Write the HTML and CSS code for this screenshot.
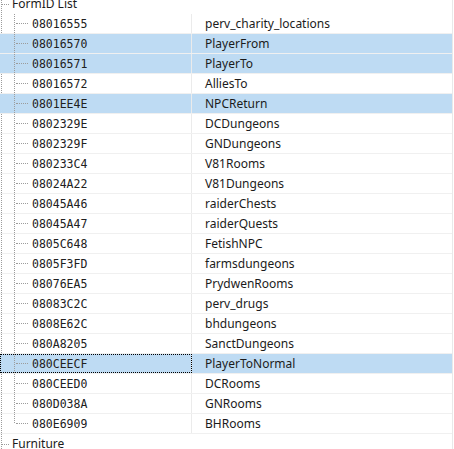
FILE: index.html
```html
<!DOCTYPE html>
<html>
<head>
<meta charset="utf-8">
<link rel="stylesheet" href="styles.css">
</head>
<body>
<div class="tree">
  <div class="node"><span class="label">FormID List</span></div>
  <div class="row"><div class="id">08016555</div><div class="name">perv_charity_locations</div></div>
  <div class="row sel"><div class="id">08016570</div><div class="name">PlayerFrom</div></div>
  <div class="row sel"><div class="id">08016571</div><div class="name">PlayerTo</div></div>
  <div class="row"><div class="id">08016572</div><div class="name">AlliesTo</div></div>
  <div class="row sel"><div class="id">0801EE4E</div><div class="name">NPCReturn</div></div>
  <div class="row"><div class="id">0802329E</div><div class="name">DCDungeons</div></div>
  <div class="row"><div class="id">0802329F</div><div class="name">GNDungeons</div></div>
  <div class="row"><div class="id">080233C4</div><div class="name">V81Rooms</div></div>
  <div class="row"><div class="id">08024A22</div><div class="name">V81Dungeons</div></div>
  <div class="row"><div class="id">08045A46</div><div class="name">raiderChests</div></div>
  <div class="row"><div class="id">08045A47</div><div class="name">raiderQuests</div></div>
  <div class="row"><div class="id">0805C648</div><div class="name">FetishNPC</div></div>
  <div class="row"><div class="id">0805F3FD</div><div class="name">farmsdungeons</div></div>
  <div class="row"><div class="id">08076EA5</div><div class="name">PrydwenRooms</div></div>
  <div class="row"><div class="id">08083C2C</div><div class="name">perv_drugs</div></div>
  <div class="row"><div class="id">0808E62C</div><div class="name">bhdungeons</div></div>
  <div class="row"><div class="id">080A8205</div><div class="name">SanctDungeons</div></div>
  <div class="row sel"><div class="id focus">080CEECF</div><div class="name">PlayerToNormal</div></div>
  <div class="row"><div class="id">080CEED0</div><div class="name">DCRooms</div></div>
  <div class="row"><div class="id">080D038A</div><div class="name">GNRooms</div></div>
  <div class="row last"><div class="id">080E6909</div><div class="name">BHRooms</div></div>
  <div class="node"><span class="label">Furniture</span></div>
</div>
</body>
</html>
```
FILE: styles.css
```css
html, body {
  margin: 0;
  padding: 0;
  background: #fff;
  overflow: hidden;
}

.tree {
  width: 452px;
  margin-top: -6px;
  border-right: 1px solid #e9e9e9;
  font-family: "Noto Sans", "Open Sans", sans-serif;
  font-size: 12px;
  color: #1b1b1b;
  /* root-level connector running down the left edge */
  background-image: repeating-linear-gradient(to bottom, #9c9c9c 0 1px, transparent 1px 2px);
  background-size: 1px 100%;
  background-position: 1px 0;
  background-repeat: no-repeat;
}

/* top-level group entries */
.node {
  height: 20px;
  display: flex;
  align-items: center;
  gap: 3px;
}

.node::before {
  content: "";
  width: 8px;
  margin-left: 1px;
  border-top: 1px dotted #9c9c9c;
}

.label {
  line-height: 20px;
}

/* child records */
.row {
  display: flex;
  height: 20px;
  box-sizing: border-box;
  border-bottom: 1px solid #f0f0f0;
}

.row.sel {
  background-color: #bedbf3;
}

.id {
  width: 192px;
  flex: none;
  box-sizing: border-box;
  border-right: 1px solid #ebebeb;
  padding-left: 16px;
  display: flex;
  align-items: center;
  gap: 4px;
  font-family: "DejaVu Sans Mono", monospace;
  font-size: 11.5px;
  color: #202020;
  background-image: repeating-linear-gradient(to bottom, #9c9c9c 0 1px, transparent 1px 2px);
  background-size: 1px 20px;
  background-position: 14px 0;
  background-repeat: no-repeat;
}

.row.last .id {
  background-size: 1px 10px;
}

.id::before {
  content: "";
  width: 12px;
  border-top: 1px dotted #9c9c9c;
}

.id.focus {
  outline: 1px dotted #000;
  outline-offset: -1px;
}

.name {
  flex: 1;
  padding-left: 13px;
  display: flex;
  align-items: center;
}
```
